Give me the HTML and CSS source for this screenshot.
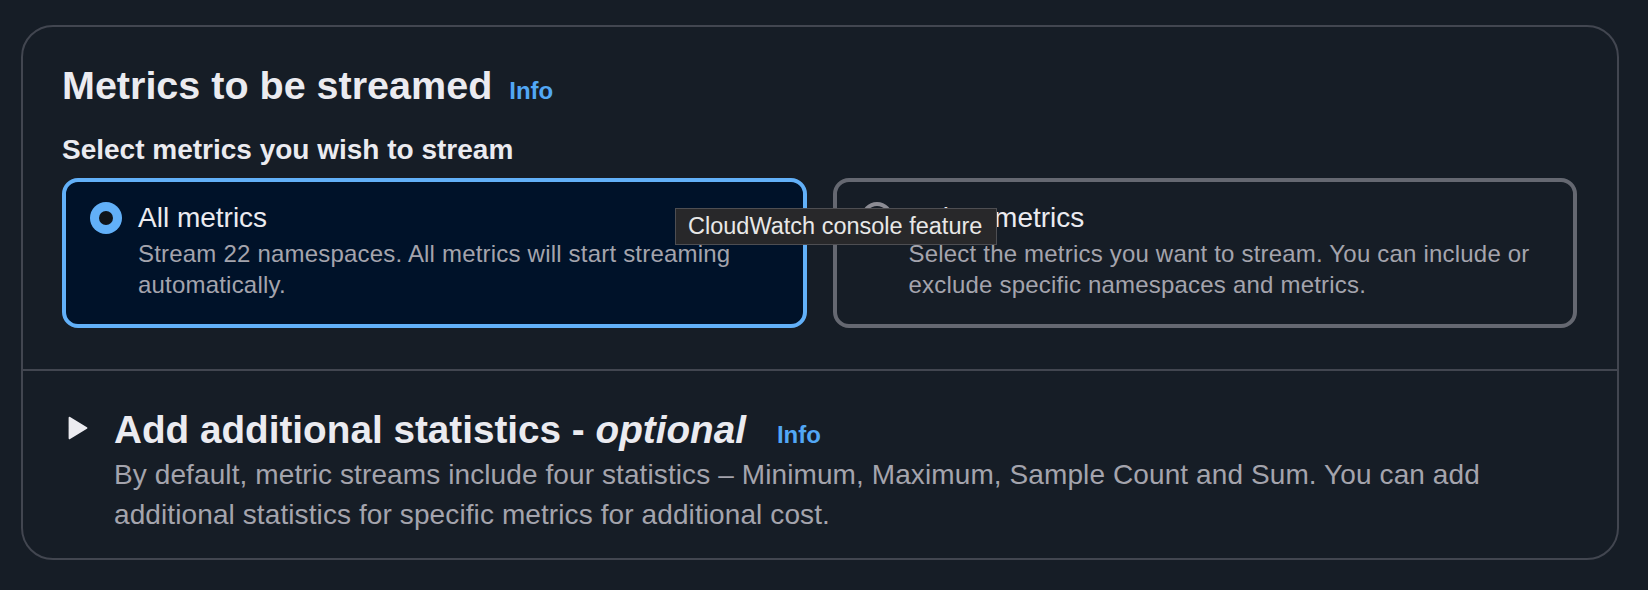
FILE: index.html
```html
<!DOCTYPE html>
<html lang="en">
<head>
<meta charset="utf-8">
<title>Metrics to be streamed</title>
<link rel="stylesheet" href="styles.css">
</head>
<body>
<div class="page">
  <div class="card">
    <section class="section section-metrics">
      <div class="heading-row">
        <h2 class="title">Metrics to be streamed</h2>
        <a class="info info-title">Info</a>
      </div>
      <div class="field-label">Select metrics you wish to stream</div>
      <div class="tiles">
        <div class="tile tile-selected">
          <span class="radio radio-checked"><span class="radio-dot"></span></span>
          <div class="tile-text">
            <div class="tile-label">All metrics</div>
            <div class="tile-desc">Stream 22 namespaces. All metrics will start streaming automatically.</div>
          </div>
        </div>
        <div class="tile">
          <span class="radio"></span>
          <div class="tile-text">
            <div class="tile-label">Select metrics</div>
            <div class="tile-desc">Select the metrics you want to stream. You can include or exclude specific namespaces and metrics.</div>
          </div>
        </div>
      </div>
    </section>
    <section class="section section-stats">
      <div class="expand-header">
        <svg class="caret" width="32" height="48" viewBox="0 0 32 48" aria-hidden="true">
          <polygon points="7.6,11.8 24.4,22 7.6,32.2" fill="#ebebf0" stroke="#ebebf0" stroke-width="2" stroke-linejoin="round"/>
        </svg>
        <h2 class="title title-stats">Add additional statistics - <i>optional</i></h2>
        <a class="info info-stats">Info</a>
      </div>
      <p class="expand-desc">By default, metric streams include four statistics – Minimum, Maximum, Sample Count and Sum. You can add additional statistics for specific metrics for additional cost.</p>
    </section>
  </div>
  <div class="tooltip">CloudWatch console feature</div>
</div>
</body>
</html>
```
FILE: styles.css
```css
html, body {
  margin: 0;
  padding: 0;
  background: #161d26;
}

body {
  font-family: "Liberation Sans", Arial, sans-serif;
  color: #ebebf0;
}

.page {
  position: relative;
  padding: 25px 29px 24px 21px;
}

.card {
  border: 2px solid #424650;
  border-radius: 32px;
  background: #161d26;
}

.section {
  padding-left: 39px;
  padding-right: 40px;
}

.section-metrics {
  padding-top: 34px;
  padding-bottom: 41px;
  border-bottom: 2px solid #424650;
}

.heading-row {
  display: flex;
  align-items: baseline;
}

.title {
  margin: 0;
  font-size: 39.5px;
  line-height: 48px;
  font-weight: 700;
  color: #ebebf0;
}

.info {
  font-size: 24px;
  font-weight: 700;
  color: #52a7f5;
  cursor: pointer;
}

.info-title {
  margin-left: 17px;
}

.field-label {
  margin-top: 21px;
  font-size: 28px;
  line-height: 40px;
  font-weight: 700;
  color: #ebebf0;
}

.tiles {
  margin-top: 8px;
  display: grid;
  grid-template-columns: 1fr 1fr;
  column-gap: 26px;
}

.tile {
  display: flex;
  align-items: flex-start;
  border: 4px solid #656871;
  border-radius: 16px;
  padding: 16px 24px 24px 24px;
  background: #161d26;
}

.tile-selected {
  border-color: #62b0f8;
  background: #001229;
}

.radio {
  flex: 0 0 auto;
  box-sizing: border-box;
  width: 32px;
  height: 32px;
  margin-top: 4px;
  margin-right: 16px;
  border-radius: 50%;
  border: 4px solid #8c8c94;
  display: flex;
  align-items: center;
  justify-content: center;
}

.radio-checked {
  border: none;
  background: #62b0f8;
}

.radio-dot {
  width: 14px;
  height: 14px;
  border-radius: 50%;
  background: #0f141a;
}

.tile-label {
  font-size: 28px;
  line-height: 40px;
  color: #ebebf0;
}

.tile-desc {
  font-size: 24px;
  line-height: 31px;
  letter-spacing: 0.2px;
  color: #a4a4ad;
}

.section-stats {
  padding-top: 35px;
  padding-bottom: 23px;
}

.expand-header {
  display: flex;
  align-items: baseline;
}

.caret {
  flex: 0 0 auto;
  align-self: flex-start;
  margin-right: 20px;
}

.title-stats {
  font-size: 38.7px;
}

.title-stats i {
  font-style: italic;
}

.info-stats {
  margin-left: 31px;
}

.expand-desc {
  margin: 1px 0 0 52px;
  font-size: 28px;
  line-height: 40px;
  letter-spacing: 0.1px;
  color: #a4a4ad;
}

.tooltip {
  position: absolute;
  left: 675px;
  top: 208px;
  box-sizing: border-box;
  width: 322px;
  height: 37px;
  padding: 0 12px;
  line-height: 35px;
  font-size: 23.5px;
  color: #e8e8e8;
  background: #28282a;
  border: 1px solid #4e4e52;
  white-space: nowrap;
}
```
